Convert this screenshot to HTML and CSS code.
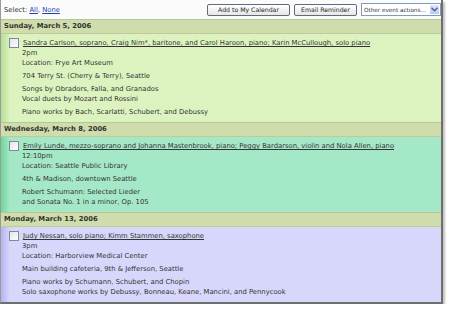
FILE: index.html
```html
<!DOCTYPE html>
<html lang="en">

<head>
    <meta charset="UTF-8">
    <title>Events</title>
    <link rel="stylesheet" href="styles.css">
</head>

<body>
    <div class="window">
        <div class="toolbar">
            <div class="select-links">Select: <a href="#">All</a>, <a href="#">None</a></div>
            <div class="actions">
                <button class="btn btn-add">Add to My Calendar</button>
                <button class="btn btn-email">Email Reminder</button>
                <div class="dropdown">
                    <span class="dropdown-label">Other event actions...</span>
                    <span class="dropdown-arrow">
                        <svg width="7" height="5" viewBox="0 0 7 5">
                            <path d="M0.5 0.8 L3.5 3.8 L6.5 0.8" fill="none" stroke="#4d6185" stroke-width="1.4"/>
                        </svg>
                    </span>
                </div>
            </div>
        </div>

        <div class="day">Sunday, March 5, 2006</div>
        <div class="event event-green">
            <div class="title-row">
                <span class="check"></span>
                <a href="#" class="title">Sandra Carlson, soprano, Craig Nim*, baritone, and Carol Haroon, piano; Karin McCullough, solo piano</a>
            </div>
            <div class="details">
                <p>2pm<br>Location: Frye Art Museum</p>
                <p>704 Terry St. (Cherry &amp; Terry), Seattle</p>
                <p>Songs by Obradors, Falla, and Granados<br>Vocal duets by Mozart and Rossini</p>
                <p>Piano works by Bach, Scarlatti, Schubert, and Debussy</p>
            </div>
        </div>

        <div class="day">Wednesday, March 8, 2006</div>
        <div class="event event-teal">
            <div class="title-row">
                <span class="check"></span>
                <a href="#" class="title">Emily Lunde, mezzo-soprano and Johanna Mastenbrook, piano; Peggy Bardarson, violin and Nola Allen, piano</a>
            </div>
            <div class="details">
                <p>12:10pm<br>Location: Seattle Public Library</p>
                <p>4th &amp; Madison, downtown Seattle</p>
                <p>Robert Schumann: Selected Lieder<br>and Sonata No. 1 in a minor, Op. 105</p>
            </div>
        </div>

        <div class="day">Monday, March 13, 2006</div>
        <div class="event event-lavender">
            <div class="title-row">
                <span class="check"></span>
                <a href="#" class="title">Judy Nessan, solo piano; Kimm Stammen, saxophone</a>
            </div>
            <div class="details">
                <p>3pm<br>Location: Harborview Medical Center</p>
                <p>Main building cafeteria, 9th &amp; Jefferson, Seattle</p>
                <p>Piano works by Schumann, Schubert, and Chopin<br>Solo saxophone works by Debussy, Bonneau, Keane, Mancini, and Pennycook</p>
            </div>
        </div>
    </div>
</body>

</html>
```

FILE: styles.css
```css
body {
    margin: 0;
    background-color: #ffffff;
    font-family: "DejaVu Sans", Verdana, sans-serif;
    font-size: 6.8px;
    color: #333333;
}

.window {
    width: 440px;
    border-left: 1px solid #9a9a9a;
    border-right: 2px solid #6e6e6e;
    border-bottom: 2px solid #6e6e6e;
    box-shadow: 2px 2px 2px rgba(0, 0, 0, 0.25);
}

/* toolbar */

.toolbar {
    height: 19px;
    display: flex;
    align-items: center;
    justify-content: space-between;
    background-color: #fbfbfb;
    padding: 0 0 0 3px;
}

.select-links {
    font-size: 6.8px;
}

.select-links a {
    color: #1d3fb3;
}

.actions {
    display: flex;
    align-items: center;
    gap: 4px;
}

.btn {
    height: 12px;
    padding: 0;
    font-family: "DejaVu Sans", Verdana, sans-serif;
    font-size: 6.2px;
    color: #222;
    white-space: nowrap;
    background: linear-gradient(#ffffff, #e6e6e6);
    border: 1px solid #5f6b7a;
    border-radius: 2px;
}

.btn-add {
    width: 83px;
}

.btn-email {
    width: 63px;
}

.dropdown {
    width: 78px;
    height: 11px;
    display: flex;
    align-items: center;
    justify-content: space-between;
    background-color: #ffffff;
    border: 1px solid #7f9db9;
}

.dropdown-label {
    padding-left: 2px;
    font-size: 5.7px;
    white-space: nowrap;
}

.dropdown-arrow {
    flex: none;
    width: 9px;
    height: 9px;
    margin-right: 1px;
    display: flex;
    align-items: center;
    justify-content: center;
    background: linear-gradient(#dbe6fd, #b9cdf8);
}

/* days and events */

.day {
    height: 13px;
    line-height: 13px;
    padding-left: 3px;
    font-weight: bold;
    background-color: #cfdcab;
    border-top: 1px solid #b7c694;
    border-bottom: 1px solid #bccb9c;
}

.event {
    padding: 4px 8px 5px 8px;
    line-height: 10px;
}

.event-green {
    background: linear-gradient(to right, #b6df95, #dcf3c0 9px);
}

.event-teal {
    background: linear-gradient(to right, #6fd69c, #a5e8c8 9px);
}

.event-lavender {
    background: linear-gradient(to right, #b4b4ef, #d7d7fb 9px);
}

.title-row {
    display: flex;
    align-items: center;
    height: 10px;
}

.check {
    width: 8px;
    height: 8px;
    margin-right: 4px;
    background: linear-gradient(135deg, #e4e4e4, #ffffff);
    border: 1px solid #7b8a9e;
}

.title {
    color: #333333;
    white-space: nowrap;
}

.details {
    padding-left: 13px;
}

.details p {
    margin: 3px 0 0 0;
}

.details p:first-child {
    margin-top: 0;
}
```
